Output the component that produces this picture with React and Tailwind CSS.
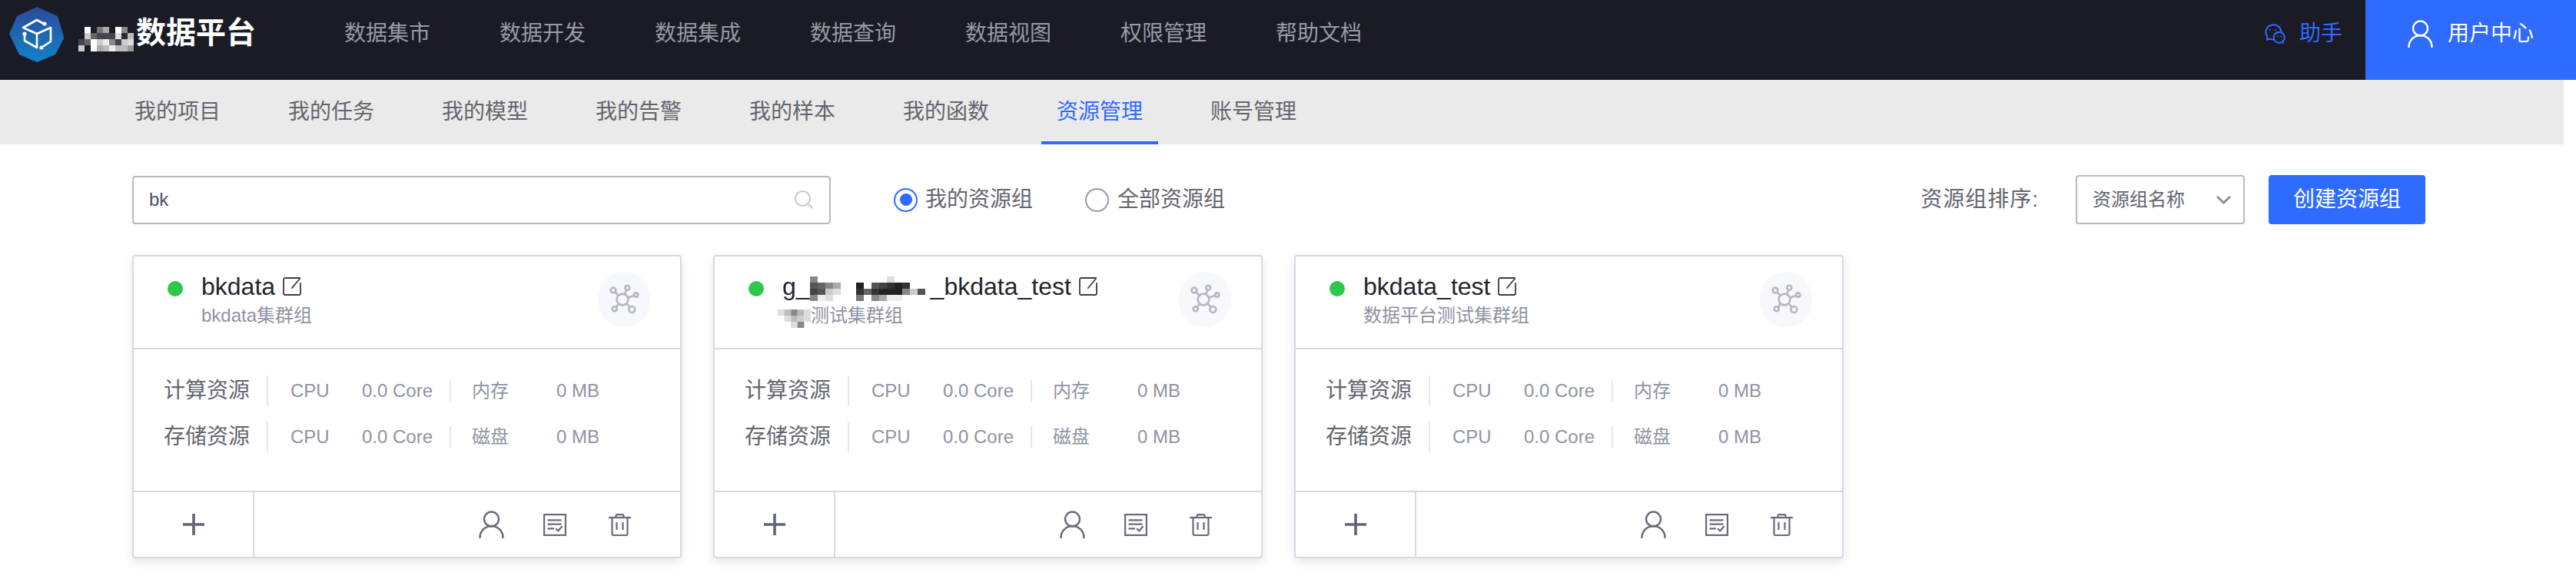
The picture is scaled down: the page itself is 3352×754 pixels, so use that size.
const topNav = ['数据集市', '数据开发', '数据集成', '数据查询', '数据视图', '权限管理', '帮助文档'];
const subNav = ['我的项目', '我的任务', '我的模型', '我的告警', '我的样本', '我的函数', '资源管理', '账号管理'];

const logoMosaic = [
  ['', '#fff', '', '#777', '#a8a8a8', '', '#fff', '#8a8a8a', ''],
  ['', '#ccc', '#666', '#44454f', '#44454f', '#44454f', '#ddd', '#2a2b35', '#bbb'],
  ['#44454f', '#666', '#fff', '#ccc', '#eee', '#888', '#44454f', '#ccc', '#ddd'],
  ['#ccc', '', '#fff', '#aaa', '#bbb', '#eee', '#bbb', '#bbb', '#999'],
];

const titleMosaic = [
  ['#888', '', '', '', '', '', '', '', '', '', '#ddd', '', '', '', '', ''],
  ['#555', '#666', '#888', '#aaa', '', '', '#222', '', '#555', '#444', '#333', '#222', '#333', '', '', ''],
  ['#444', '#555', '#ccc', '#ddd', '', '', '#333', '#666', '#333', '#222', '#222', '#222', '#888', '#ccc', '#555', ''],
  ['#888', '#eee', '#ddd', '', '', '', '#777', '', '#888', '#aaa', '#eee', '#eee', '', '', '', ''],
];

const subMosaic = [
  ['#ddd', '#bbb', '#888', '#bbb', '#ddd'],
  ['', '#ddd', '#bbb', '#ccc', '#ddd'],
  ['', '', '#ddd', '#888', ''],
];

const cards = [
  { id: 1, title: 'bkdata', sub: 'bkdata集群组' },
  { id: 2, title: '_bkdata_test', prefix: 'g_', sub: '测试集群组', masked: true },
  { id: 3, title: 'bkdata_test', sub: '数据平台测试集群组' },
];

function Mosaic({ rows, cellW, cellH, className }) {
  return (
    <svg width={rows[0].length * cellW} height={rows.length * cellH} className={className}>
      {rows.map((row, y) =>
        row.map((color, x) => color && <rect key={x} x={x * cellW} y={y * cellH} width={cellW} height={cellH} fill={color} />)
      )}
    </svg>
  );
}

function Logo() {
  return (
    <svg width="72" height="74" viewBox="0 0 72 74" className="shrink-0">
      <defs>
        <linearGradient id="logoFill" x1="0" y1="0" x2="0" y2="1">
          <stop offset="0" stopColor="#2b4a9c" />
          <stop offset="1" stopColor="#1382c9" />
        </linearGradient>
      </defs>
      <path d="M36 1 L63 13 L70 36 L71 42 L60 63 L36 73 L13 63 L0 36 L10 13 Z" fill="url(#logoFill)" />
      <g fill="none" stroke="#fff" strokeWidth="2.6" strokeLinecap="round" strokeLinejoin="round" transform="translate(-12 -7)">
        <path d="M57 30 L48 25 L30 35 L48 43 L66 35 V53 L54 61" />
        <path d="M48 43 V61 L32 52 V43" />
      </g>
      <g fill="#fff" transform="translate(-12 -7)">
        <circle cx="58" cy="30" r="2.6" />
        <circle cx="32" cy="43" r="2.6" />
        <circle cx="54" cy="61" r="2.6" />
      </g>
    </svg>
  );
}

function UserIcon({ color }) {
  return (
    <svg width="33" height="37" viewBox="0 0 33 37" fill="none" stroke={color} strokeWidth="2.4" className="shrink-0">
      <circle cx="16.5" cy="11" r="9.5" />
      <path d="M1.5 36 V35 A15 15 0 0 1 31.5 35 V36" />
    </svg>
  );
}

function ChatIcon() {
  return (
    <svg width="30" height="26" viewBox="0 0 30 26" fill="#1a1b25" stroke="#2f6bff" strokeWidth="2" strokeLinejoin="round" className="shrink-0">
      <path d="M5.2 16.5 A10 9.5 0 1 1 11.2 20.2 Q9 20.2 7.5 19.5 L5 21 Z" />
      <path d="M25.5 22.8 A7 7 0 1 0 20.8 24.7 Q22 24.7 23 24.2 L25.6 24.6 Z" />
      <circle cx="9" cy="8" r="1.1" fill="#2f6bff" stroke="none" />
      <circle cx="15.7" cy="8" r="1.1" fill="#2f6bff" stroke="none" />
      <circle cx="19.3" cy="16.5" r="1" fill="#2f6bff" stroke="none" />
      <circle cx="23.3" cy="16.5" r="1" fill="#2f6bff" stroke="none" />
    </svg>
  );
}

function EditIcon() {
  return (
    <svg width="24" height="24" viewBox="0 0 24 24" fill="none" stroke="#3a3b44" strokeWidth="1.8" strokeLinecap="round" className="shrink-0">
      <path d="M22 1 H3 A2 2 0 0 0 1 3 V21 A2 2 0 0 0 3 23 H21 A2 2 0 0 0 23 21 V8" />
      <path d="M22 2 L12 14" />
    </svg>
  );
}

function ClusterIcon() {
  return (
    <svg width="40" height="40" viewBox="0 0 40 40" fill="none" stroke="#b5b6c2" strokeWidth="2.6">
      <circle cx="18" cy="20" r="7.4" />
      <circle cx="6" cy="8" r="3.4" />
      <circle cx="24.3" cy="4.7" r="3" />
      <circle cx="35.7" cy="14" r="2.6" />
      <circle cx="30.3" cy="33" r="4" />
      <circle cx="7.7" cy="32.3" r="3" />
      <path d="M8.5 10.5 L12.7 14.8 M23.3 7.6 L21 13.3 M33 14.8 L25 17.8 M27.8 29.8 L23.3 25.3 M10 30 L12.8 25.3" />
    </svg>
  );
}

function DocIcon() {
  return (
    <svg width="30" height="29" viewBox="0 0 30 29" fill="none" stroke="#666b7c" strokeWidth="2.2" className="shrink-0">
      <rect x="1.1" y="1.1" width="27.8" height="26.8" />
      <path d="M5.5 8.3 H23.5 M5.5 13.7 H23.5 M5.5 19.3 H14" />
      <path d="M16 19.3 L19.3 22.3 L24.5 16.2" />
    </svg>
  );
}

function TrashIcon() {
  return (
    <svg width="29" height="29" viewBox="0 0 29 29" fill="none" stroke="#666b7c" strokeWidth="2.2" className="shrink-0">
      <path d="M0 5 H29" />
      <path d="M9.5 5 V2.5 A1.5 1.5 0 0 1 11 1.1 H18 A1.5 1.5 0 0 1 19.5 2.5 V5" />
      <path d="M4.5 5 V26 A2 2 0 0 0 6.5 28 H22.5 A2 2 0 0 0 24.5 26 V5" />
      <path d="M10.5 11 V21 M18.5 11 V21" />
    </svg>
  );
}

function ResourceRow({ label, memLabel }) {
  return (
    <div className="flex h-10 items-center text-2xl leading-8 text-[#8f93a3]">
      <div className="w-[134px] text-[28px] leading-10 text-[#63656e]">{label}</div>
      <div className="h-10 w-0.5 bg-[#e6e6ee]" />
      <div className="ml-[29px] w-[93px]">CPU</div>
      <div className="w-[114px]">0.0 Core</div>
      <div className="h-7 w-0.5 bg-[#e6e6ee]" />
      <div className="ml-[27px] w-[110px]">{memLabel}</div>
      <div>0 MB</div>
    </div>
  );
}

function ResourceCard({ card }) {
  return (
    <div className="flex h-[395px] w-[715px] flex-col rounded border-2 border-[#d8d8e3] bg-white shadow-[0_5px_12px_rgba(60,60,90,0.12)]">
      <div className="flex h-[121px] border-b-2 border-[#d8d8e3] pl-11">
        <div className="mt-8 h-5 w-5 rounded-full bg-[#2dc84a]" />
        <div className="ml-6 pt-[19px]">
          <div className="flex h-10 items-center text-[32px] leading-10 text-[#23242c]">
            {card.prefix}
            {card.masked && <Mosaic rows={titleMosaic} cellW={10} cellH={8} className="-mr-[3px] self-start mt-[7px]" />}
            {card.title}
            <span className="ml-[10px]"><EditIcon /></span>
          </div>
          <div className="mt-0.5 flex h-8 items-center text-2xl leading-8 text-[#8f92a3]">
            {card.masked && <Mosaic rows={subMosaic} cellW={8.6} cellH={8} className="-ml-[6px] -mb-[8px]" />}
            {card.sub}
          </div>
        </div>
        <div className="mr-[39px] ml-auto mt-5 flex h-[72px] w-[68px] items-center justify-center rounded-full bg-[#f7f8fc] pr-[1px]">
          <ClusterIcon />
        </div>
      </div>
      <div className="flex flex-1 flex-col gap-5 pt-[34px] pl-[39px]">
        <ResourceRow label="计算资源" memLabel="内存" />
        <ResourceRow label="存储资源" memLabel="磁盘" />
      </div>
      <div className="flex h-[86px] border-t-2 border-[#d8d8e3]">
        <div className="flex w-[157px] items-center justify-center border-r-2 border-[#d8d8e3]">
          <svg width="28" height="28" viewBox="0 0 28 28" stroke="#5f6475" strokeWidth="3.6">
            <path d="M14 0 V28 M0 14 H28" />
          </svg>
        </div>
        <div className="flex flex-1 items-center justify-end pr-16">
          <UserIcon color="#666b7c" />
          <span className="ml-[51px]"><DocIcon /></span>
          <span className="ml-[55px]"><TrashIcon /></span>
        </div>
      </div>
    </div>
  );
}

export default function App() {
  return (
    <div className="h-[754px] w-full overflow-hidden bg-white font-['Liberation_Sans','Noto_Sans_CJK_SC',sans-serif]">
      <header className="flex h-[104px] bg-[#1a1b25]">
        <div className="flex w-[448px] items-start pl-3 pt-2">
          <Logo />
          <Mosaic rows={logoMosaic} cellW={8} cellH={8} className="ml-[18px] mt-[27px]" />
          <span className="ml-[3px] mt-[10px] text-[39px] leading-[50px] font-bold text-white">数据平台</span>
        </div>
        <nav className="flex items-center gap-[90px] pb-4">
          {topNav.map((item) => (
            <a key={item} className="text-[28px] leading-10 text-[#979ba5]">{item}</a>
          ))}
        </nav>
        <div className="ml-auto flex items-center pb-4 pr-[30px]">
          <ChatIcon />
          <span className="ml-[17px] text-[28px] leading-10 text-[#2f6bff]">助手</span>
        </div>
        <div className="flex w-[274px] items-center bg-[#2f6bff] pb-4 pl-[55px]">
          <UserIcon color="#ffffff" />
          <span className="ml-[19px] text-[28px] leading-10 text-white">用户中心</span>
        </div>
      </header>

      <div className="mr-4 flex h-[84px] gap-12 bg-[#eaeaea] pl-[155px]">
        {subNav.map((item) => {
          const active = item === '资源管理';
          return (
            <a key={item} className={`flex items-center border-b-4 px-5 pt-1 text-[28px] leading-10 ${active ? 'border-[#2f6bff] text-[#2f6bff]' : 'border-transparent text-[#63656e]'}`}>
              {item}
            </a>
          );
        })}
      </div>

      <div className="mt-10 flex items-center pl-[172px] pr-[196px]">
        <div className="flex h-[63px] w-[909px] items-center justify-between rounded border-2 border-[#b9b9c1] pl-5 pr-[21px] text-2xl text-[#4d4f5c]">
          <span>bk</span>
          <svg width="24" height="24" viewBox="0 0 24 24" fill="none" stroke="#c4c6cc" strokeWidth="2">
            <circle cx="10.5" cy="10.5" r="9.5" />
            <path d="M17.5 17.5 L23 23" />
          </svg>
        </div>
        <label className="ml-[82px] flex items-center gap-[10px] text-[28px] leading-10 text-[#63656e]">
          <span className="flex h-[31px] w-[31px] items-center justify-center rounded-full border-2 border-[#2f6bff]">
            <span className="h-4 w-4 rounded-full bg-[#2f6bff]" />
          </span>
          我的资源组
        </label>
        <label className="ml-[68px] flex items-center gap-[11px] text-[28px] leading-10 text-[#63656e]">
          <span className="h-[31px] w-[31px] rounded-full border-2 border-[#979ba5]" />
          全部资源组
        </label>
        <span className="ml-auto text-[28px] leading-10 tracking-[1px] text-[#63656e]">资源组排序:</span>
        <div className="ml-12 flex h-16 w-[220px] items-center justify-between rounded border-2 border-[#b9b9c1] pl-5 pr-4 text-2xl text-[#63656e]">
          <span>资源组名称</span>
          <svg width="19" height="11" viewBox="0 0 19 11" fill="none" stroke="#8b8f9c" strokeWidth="3">
            <path d="M1 1 L9.5 9 L18 1" />
          </svg>
        </div>
        <button className="ml-[31px] h-16 w-[204px] rounded bg-[#2f6bff] text-[28px] text-white">创建资源组</button>
      </div>

      <div className="mt-10 flex gap-[41px] pl-[172px]">
        {cards.map((card) => (
          <ResourceCard key={card.id} card={card} />
        ))}
      </div>
    </div>
  );
}
